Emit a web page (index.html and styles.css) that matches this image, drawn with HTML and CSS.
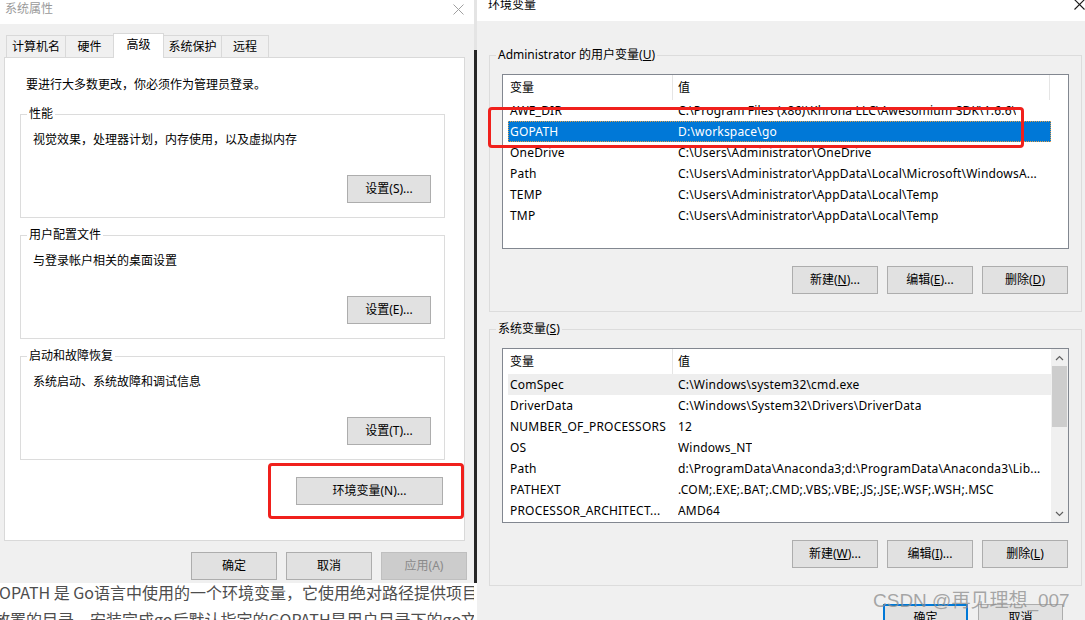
FILE: index.html
```html
<!DOCTYPE html>
<html lang="zh-CN">
<head>
<meta charset="utf-8">
<title>环境变量</title>
<link rel="stylesheet" href="styles.css">
</head>
<body>
<div class="screen">
  <div class="left-col">
    <div class="dlg sys">
      <div class="titlebar">
        <span class="title">系统属性</span>
        <svg class="close" width="11" height="11" viewBox="0 0 11 11"><path d="M0.5 0.5 L10.5 10.5 M10.5 0.5 L0.5 10.5" stroke="#a0a0a0" stroke-width="1" fill="none"/></svg>
      </div>
      <div class="tabs">
        <div class="tab w1">计算机名</div>
        <div class="tab w2">硬件</div>
        <div class="tab w3 active">高级</div>
        <div class="tab w4">系统保护</div>
        <div class="tab w5">远程</div>
      </div>
      <div class="panel">
        <p class="intro">要进行大多数更改，你必须作为管理员登录。</p>
        <div class="group">
          <div class="legend">性能</div>
          <div class="desc">视觉效果，处理器计划，内存使用，以及虚拟内存</div>
          <div class="btn set">设置(S)...</div>
        </div>
        <div class="group">
          <div class="legend">用户配置文件</div>
          <div class="desc">与登录帐户相关的桌面设置</div>
          <div class="btn set">设置(E)...</div>
        </div>
        <div class="group">
          <div class="legend">启动和故障恢复</div>
          <div class="desc">系统启动、系统故障和调试信息</div>
          <div class="btn set">设置(T)...</div>
        </div>
        <div class="mark">
          <div class="btn envbtn">环境变量(N)...</div>
        </div>
      </div>
      <div class="footer">
        <div class="btn">确定</div>
        <div class="btn">取消</div>
        <div class="btn disabled">应用(A)</div>
      </div>
    </div>
    <div class="blog">
      <p class="l1">GOPATH 是 Go语言中使用的一个环境变量，它使用绝对路径提供项目</p>
      <p class="l2">放置的目录。安装完成go后默认指定的GOPATH是用户目录下的go文</p>
    </div>
  </div>
  <div class="edge"></div>
  <div class="dlg env">
    <div class="titlebar">
      <span class="title">环境变量</span>
      <svg class="close" width="11" height="10" viewBox="0 0 11 10"><path d="M0.5 -0.5 L10.5 9.5 M10.5 -0.5 L0.5 9.5" stroke="#1a1a1a" stroke-width="1.1" fill="none"/></svg>
    </div>
    <div class="grp grp1">
      <div class="legend">Administrator 的用户变量(<u>U</u>)</div>
      <div class="list">
        <div class="list-main">
          <div class="head"><div class="c1">变量</div><div class="c2 bordered">值</div></div>
          <div class="rows">
            <div class="row"><div class="v">AWE_DIR</div><div class="val">C:\Program Files (x86)\Khrona LLC\Awesomium SDK\1.6.6\</div></div>
            <div class="row sel"><div class="v">GOPATH</div><div class="val">D:\workspace\go</div></div>
            <div class="row"><div class="v">OneDrive</div><div class="val">C:\Users\Administrator\OneDrive</div></div>
            <div class="row"><div class="v">Path</div><div class="val">C:\Users\Administrator\AppData\Local\Microsoft\WindowsA...</div></div>
            <div class="row"><div class="v">TEMP</div><div class="val">C:\Users\Administrator\AppData\Local\Temp</div></div>
            <div class="row"><div class="v">TMP</div><div class="val">C:\Users\Administrator\AppData\Local\Temp</div></div>
          </div>
        </div>
      </div>
      <div class="btns">
        <div class="btn">新建(<u>N</u>)...</div>
        <div class="btn">编辑(<u>E</u>)...</div>
        <div class="btn">删除(<u>D</u>)</div>
      </div>
    </div>
    <div class="grp grp2">
      <div class="legend">系统变量(<u>S</u>)</div>
      <div class="list">
        <div class="list-main">
          <div class="head"><div class="c1">变量</div><div class="c2">值</div></div>
          <div class="rows">
            <div class="row hover"><div class="v">ComSpec</div><div class="val">C:\Windows\system32\cmd.exe</div></div>
            <div class="row"><div class="v">DriverData</div><div class="val">C:\Windows\System32\Drivers\DriverData</div></div>
            <div class="row"><div class="v">NUMBER_OF_PROCESSORS</div><div class="val">12</div></div>
            <div class="row"><div class="v">OS</div><div class="val">Windows_NT</div></div>
            <div class="row"><div class="v">Path</div><div class="val">d:\ProgramData\Anaconda3;d:\ProgramData\Anaconda3\Lib...</div></div>
            <div class="row"><div class="v">PATHEXT</div><div class="val">.COM;.EXE;.BAT;.CMD;.VBS;.VBE;.JS;.JSE;.WSF;.WSH;.MSC</div></div>
            <div class="row"><div class="v">PROCESSOR_ARCHITECT...</div><div class="val">AMD64</div></div>
          </div>
        </div>
        <div class="sbar">
          <div class="sb-btn"><svg width="9" height="6" viewBox="0 0 9 6"><path d="M1 5 L4.5 1.5 L8 5" stroke="#606060" stroke-width="1.2" fill="none"/></svg></div>
          <div class="sb-thumb"></div>
          <div class="sb-space"></div>
          <div class="sb-btn"><svg width="9" height="6" viewBox="0 0 9 6"><path d="M1 1 L4.5 4.5 L8 1" stroke="#606060" stroke-width="1.2" fill="none"/></svg></div>
        </div>
      </div>
      <div class="btns">
        <div class="btn">新建(<u>W</u>)...</div>
        <div class="btn">编辑(<u>I</u>)...</div>
        <div class="btn">删除(<u>L</u>)</div>
      </div>
    </div>
    <div class="footer">
      <div class="btn default">确定</div>
      <div class="btn">取消</div>
    </div>
  </div>
  <div class="annot"></div>
  <div class="watermark">CSDN @再见理想_007</div>
</div>
</body>
</html>
```
FILE: styles.css
```css
* { box-sizing: border-box; }
html, body { margin: 0; padding: 0; }
body {
  width: 1085px;
  height: 620px;
  overflow: hidden;
  background: #fff;
  font-family: "Noto Sans", "Noto Sans CJK SC", sans-serif;
  font-size: 12px;
  color: #000;
}
.screen { display: flex; width: 1085px; height: 620px; position: relative; overflow: hidden; }

.left-col { width: 474px; flex: none; overflow: hidden; }
.edge {
  width: 3px;
  flex: none;
  background: linear-gradient(#e4e4e4 0 50px, #262626 50px 583px, #ffffff 583px);
}

.dlg { background: #f0f0f0; }
.titlebar { background: #fff; display: flex; justify-content: space-between; align-items: flex-start; flex: none; }
.title { line-height: 12px; }

/* ---------- System properties dialog ---------- */
.sys { height: 583px; display: flex; flex-direction: column; }
.sys .titlebar { height: 24px; padding: 3px 10px 0 5px; color: #9a9a9a; }
.sys .close { margin-top: 1px; }

.tabs { display: flex; align-items: flex-end; height: 24px; margin-top: 9px; padding-left: 6px; flex: none; }
.tab {
  height: 22px;
  border: 1px solid #d9d9d9;
  border-bottom: 0;
  margin-left: -1px;
  line-height: 21px;
  text-align: center;
  background: #f0f0f0;
  flex: none;
}
.tab.w1 { margin-left: 0; width: 60px; }
.tab.w2 { width: 49px; }
.tab.w3 { width: 51px; }
.tab.w4 { width: 59px; }
.tab.w5 { width: 48px; }
.tab.active { height: 25px; margin-bottom: -1px; background: #fff; position: relative; z-index: 1; line-height: 21px; }

.panel {
  margin-left: 4px;
  width: 461px;
  height: 484px;
  flex: none;
  border: 1px solid #d9d9d9;
  background: #fff;
  padding: 19px 19px 0 15px;
}
.intro { margin: 0 0 0 6px; line-height: 16px; }
.group {
  margin-top: 17px;
  height: 104px;
  border: 1px solid #dcdcdc;
  padding: 0 13px 14px 12px;
  display: flex;
  flex-direction: column;
}
.intro + .group { margin-top: 21px; }
.legend {
  align-self: flex-start;
  margin: -9px 0 0 -6px;
  padding: 0 2px;
  line-height: 16px;
  background: #fff;
  white-space: nowrap;
}
.desc { margin-top: 10px; line-height: 16px; }

.btn {
  height: 28px;
  border: 1px solid #adadad;
  background: #e1e1e1;
  display: flex;
  align-items: center;
  justify-content: center;
  flex: none;
  line-height: 16px;
  white-space: nowrap;
}
.btn.set { margin-top: auto; align-self: flex-end; width: 84px; }
.mark {
  width: 196px;
  height: 56px;
  margin: 3px -19px 0 auto;
  border: 3px solid #f0201c;
  border-radius: 4px;
  display: flex;
  justify-content: flex-end;
  align-items: flex-start;
  padding: 11px 18px 0 0;
}
.btn.envbtn { width: 147px; }
.sys .footer { display: flex; justify-content: flex-end; gap: 9px; margin-top: 11px; padding-right: 7px; }
.sys .footer .btn { width: 86px; }
.btn.disabled { background: #cccccc; border-color: #bfbfbf; color: #8a8a8a; }

.blog {
  margin-top: -4px;
  font-family: "Noto Sans CJK SC", sans-serif;
  font-size: 16px;
  line-height: 27px;
  color: #4d4d4d;
  white-space: nowrap;
}
.blog p { margin: 0; }
.blog .l1 { margin-left: -12px; }
.blog .l2 { margin-left: -6px; }

/* ---------- Environment variables dialog ---------- */
.env { width: 608px; flex: none; height: 620px; display: flex; flex-direction: column; }
.env .titlebar { height: 21px; padding-left: 11px; }
.env .title { margin-top: -1px; }

.grp {
  margin-left: 12px;
  width: 593px;
  height: 257px;
  flex: none;
  border: 1px solid #dcdcdc;
  padding: 0 12px;
  display: flex;
  flex-direction: column;
}
.grp1 { margin-top: 34px; }
.grp2 { margin-top: 17px; }
.env .legend { background: #f0f0f0; }

.list {
  margin-top: 11px;
  height: 175px;
  flex: none;
  border: 1px solid #828790;
  background: #fff;
  display: flex;
}
.list-main { flex: 1; min-width: 0; }
.head { display: flex; height: 25px; line-height: 26px; }
.head .c1 { width: 170px; padding-left: 7px; border-right: 1px solid #e5e5e5; flex: none; }
.head .c2 { padding-left: 5px; flex: none; }
.head .c2.bordered { width: 377px; border-right: 1px solid #e5e5e5; }

.rows { padding-left: 5px; }
.row { display: flex; width: 543px; height: 21px; line-height: 21px; white-space: nowrap; letter-spacing: 0.2px; }
.row .v { width: 170px; padding-left: 2px; overflow: hidden; flex: none; }
.row .val { overflow: hidden; }
.row.sel { background: #0078d7; color: #fff; outline: 1px dotted #e2a04a; outline-offset: -1px; }
.row.hover { background: #eeeeee; }

.sbar { width: 17px; flex: none; background: #f0f0f0; display: flex; flex-direction: column; align-items: center; }
.sb-btn { width: 17px; height: 17px; display: flex; align-items: center; justify-content: center; flex: none; }
.sb-thumb { width: 15px; height: 61px; background: #cdcdcd; flex: none; }
.sb-space { flex: 1; }

.btns { display: flex; justify-content: flex-end; gap: 9px; margin-top: 17px; margin-right: 1px; }
.btns .btn { width: 86px; }

.env .footer { display: flex; justify-content: flex-end; gap: 10px; margin-top: 18px; padding-right: 22px; }
.env .footer .btn { width: 85px; }
.btn.default { border: 2px solid #0078d7; }

.annot {
  position: absolute;
  left: 488px;
  top: 107px;
  width: 536px;
  height: 41px;
  border: 3px solid #f0201c;
  border-radius: 4px;
}
.watermark {
  position: absolute;
  left: 873px;
  top: 590px;
  font-family: "Liberation Sans", "Noto Sans CJK SC", sans-serif;
  font-size: 19px;
  line-height: 22px;
  color: rgba(140, 140, 140, 0.75);
  white-space: nowrap;
}
```
